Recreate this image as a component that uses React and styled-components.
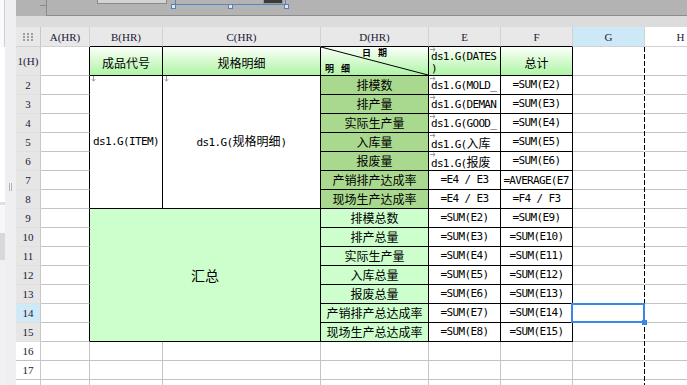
import React from "react";
import styled, { createGlobalStyle } from "styled-components";

const CJK = `"Noto Sans CJK SC", "Noto Sans", sans-serif`;
const MONO = `"DejaVu Sans Mono", "Liberation Mono", "Noto Sans CJK SC", monospace`;
const SERIF = `"Liberation Serif", "Noto Sans CJK SC", serif`;

const GRID = "#c4c4c4";
const INK = "#000";
const HEAD_GRAD = "linear-gradient(180deg, #fbfffa 0%, #d9fbd3 45%, #aef4a5 100%)";
const MID_GREEN = "#a9d98e";
const LIGHT_GREEN = "#ccffcc";

const GlobalStyle = createGlobalStyle`
  *, *::before, *::after { box-sizing: border-box; }
  html, body { margin: 0; padding: 0; background: #fff; overflow: hidden; }
  body { width: 687px; height: 385px; }
  #root { width: 687px; height: 385px; }
`;

const Page = styled.div`
  display: flex;
  width: 687px;
  height: 385px;
  overflow: hidden;
  background: #fff;
`;

const SidePanel = styled.div`
  width: 5px;
  flex-shrink: 0;
  display: flex;
  flex-direction: column;
`;

const SideBlock = styled.div`
  flex: ${(p) => (p.$h ? `0 0 ${p.$h}px` : "1 1 auto")};
  background: ${(p) => p.$bg};
  border-right: 1px solid ${(p) => p.$edge || p.$bg};
`;

const Gutter = styled.div`
  width: 11px;
  flex-shrink: 0;
  background: #efeff1;
  display: flex;
  justify-content: center;
  align-items: flex-start;
  padding-top: 183px;
`;

const Main = styled.div`
  flex: 1 1 auto;
  min-width: 0;
  display: flex;
  flex-direction: column;
`;

const TopBar = styled.div`
  flex: 0 0 16px;
  display: flex;
  background: #b3b3b3;
`;

const Ruler = styled.div`
  width: 30px;
  flex-shrink: 0;
  position: relative;
  &::after {
    content: "";
    position: absolute;
    right: 0;
    top: 5px;
    width: 6px;
    height: 1px;
    background: #8c8c8c;
  }
`;

const Canvas = styled.div`
  flex: 1 1 auto;
  position: relative;
  overflow: hidden;
  border-left: 1px solid #8c8c8c;
  border-bottom: 1px solid #8c8c8c;
`;

const TitleWidget = styled.div`
  position: absolute;
  left: 50px;
  top: -14px;
  width: 70px;
  height: 18px;
  background: #d3d3d3;
  border: 1px solid #8a8a8a;
  display: flex;
  align-items: flex-end;
  justify-content: center;
  overflow: hidden;
  padding-bottom: 3px;
  font-family: ${CJK};
  font-size: 12px;
  line-height: 12px;
  color: #333;
`;

const SelectWidget = styled.div`
  position: absolute;
  left: 128px;
  top: -10px;
  width: 111px;
  height: 15px;
  border: 1px solid #5a85c4;
`;

const DarkWidget = styled.div`
  position: absolute;
  left: 216px;
  top: -6px;
  width: 20px;
  height: 10px;
  background: #3b3b3b;
  border: 1px solid #9a9a9a;
`;

const Handle = styled.div`
  position: absolute;
  top: 4px;
  left: ${(p) => p.$x}px;
  width: 5px;
  height: 5px;
  background: #e2e7ee;
  border: 1px solid #5a7fb0;
`;

const Band = styled.div`
  flex: 0 0 11px;
  background: #dcdcdc;
`;

const Sheet = styled.div`
  display: grid;
  grid-template-columns: 25px 49px 73px 158px 108px 72px 72px 72px 72px;
  grid-template-rows: 20px 29px repeat(17, 19px);
  width: 701px;
`;

const Cell = styled.div`
  grid-column: ${(p) => p.$c} / span ${(p) => p.$cs || 1};
  grid-row: ${(p) => p.$r} / span ${(p) => p.$rs || 1};
  position: relative;
  min-width: 0;
  min-height: 0;
  display: flex;
  justify-content: ${(p) => p.$jc || "center"};
  align-items: ${(p) => p.$ai || "center"};
  background: ${(p) => p.$bg || "#fff"};
  border-right: 1px solid ${(p) => p.$rb || GRID};
  border-bottom: 1px solid ${(p) => p.$bb || GRID};
  overflow: ${(p) => (p.$open ? "visible" : "hidden")};
`;

const ColHead = styled(Cell)`
  font-family: ${SERIF};
  font-size: 11px;
  color: #1c1836;
  white-space: nowrap;
`;

const RowHead = styled(Cell)`
  font-family: ${SERIF};
  font-size: 11px;
  color: #1c1836;
  white-space: nowrap;
`;

const Label = styled.span`
  font-family: ${CJK};
  font-size: ${(p) => p.$size || 12}px;
  line-height: 1;
  color: ${INK};
  white-space: nowrap;
  padding-top: ${(p) => p.$pt || 0}px;
`;

const Formula = styled.span`
  font-family: ${MONO};
  font-size: 11px;
  letter-spacing: -0.6px;
  line-height: 12px;
  color: ${INK};
  white-space: nowrap;
`;

const Expr = styled.div`
  width: 100%;
  align-self: flex-start;
  padding: ${(p) => p.$pt ?? 3}px ${(p) => (p.$center ? 1 : 0)}px 0 ${(p) => (p.$center ? 0 : 2)}px;
  font-family: ${MONO};
  font-size: 11px;
  letter-spacing: -0.7px;
  line-height: ${(p) => p.$lh || 13}px;
  color: ${INK};
  text-align: ${(p) => (p.$center ? "center" : "left")};
  word-break: break-all;
  line-break: anywhere;
  overflow-wrap: anywhere;
  white-space: normal;
`;

const Han = styled.span`
  font-family: ${CJK};
  font-size: 12px;
  letter-spacing: 0;
`;

const Mark = styled.svg`
  position: absolute;
  top: ${(p) => p.$top ?? 1}px;
  left: 1px;
`;

const DiagCell = styled(Cell)`
  flex-direction: column;
  justify-content: space-between;
  align-items: stretch;
  padding: 1px 4px;
`;

const DiagLine = styled.svg`
  position: absolute;
  left: 0;
  top: 0;
  width: 100%;
  height: 100%;
`;

const Note = styled.span`
  position: relative;
  display: flex;
  gap: 7px;
  align-self: ${(p) => p.$side};
  font-family: ${CJK};
  font-size: 9px;
  font-weight: 700;
  line-height: 10px;
  color: ${INK};
`;

const PageBreak = styled.div`
  grid-column: 8;
  grid-row: 2 / -1;
  justify-self: end;
  width: 1px;
  position: relative;
  z-index: 1;
  background: repeating-linear-gradient(to bottom, #000 0 5px, #fff 5px 7px);
`;

const Selection = styled.div`
  position: absolute;
  top: -1px;
  left: -2px;
  right: -1px;
  bottom: -1px;
  border: 2px solid #3a87e8;
  z-index: 2;
`;

const FillHandle = styled.div`
  position: absolute;
  right: -3px;
  bottom: -3px;
  width: 5px;
  height: 5px;
  background: #3a87e8;
  z-index: 3;
`;

const DownMark = () => (
  <Mark width="5" height="6" viewBox="0 0 5 6" $top={0}>
    <path d="M2.5 0V5M0.8 3.2L2.5 5.2L4.2 3.2" stroke="#9a9a9a" fill="none" strokeWidth="1" />
  </Mark>
);

const RightMark = () => (
  <Mark width="6" height="5" viewBox="0 0 6 5" $top={0}>
    <path d="M0 2.5H5M3 0.6L5.2 2.5L3 4.4" stroke="#9a9a9a" fill="none" strokeWidth="1" />
  </Mark>
);

const CornerDots = () => (
  <svg width="10" height="8" viewBox="0 0 10 8">
    {[0, 4, 8].map((x) =>
      [0, 3, 6].map((y) => <rect key={`${x}-${y}`} x={x} y={y} width="2" height="2" fill="#9d9d9d" />)
    )}
  </svg>
);

const Grip = () => (
  <svg width="3" height="8" viewBox="0 0 3 8">
    <path d="M0.5 0V8M2.5 0V8" stroke="#b5b5b5" strokeWidth="1" />
  </svg>
);

const COLS = ["A(HR)", "B(HR)", "C(HR)", "D(HR)", "E", "F", "G", "H"];

const DETAIL = [
  { d: "排模数", e: { wrap: ["ds1.G(MOLD_QTY)"] }, f: "=SUM(E2)" },
  { d: "排产量", e: { wrap: ["ds1.G(DEMAND_QTY)"] }, f: "=SUM(E3)" },
  { d: "实际生产量", e: { wrap: ["ds1.G(GOOD_QTY)"] }, f: "=SUM(E4)" },
  { d: "入库量", e: { wrap: ["ds1.G(", "入库量", ")"] }, f: "=SUM(E5)" },
  { d: "报废量", e: { wrap: ["ds1.G(", "报废量", ")"] }, f: "=SUM(E6)" },
  { d: "产销排产达成率", e: { text: "=E4 / E3" }, f: "=AVERAGE(E7:E8)", fWrap: true },
  { d: "现场生产达成率", e: { text: "=E4 / E3" }, f: "=F4 / F3" },
];

const SUMMARY = [
  { d: "排模总数", e: "=SUM(E2)", f: "=SUM(E9)" },
  { d: "排产总量", e: "=SUM(E3)", f: "=SUM(E10)" },
  { d: "实际生产量", e: "=SUM(E4)", f: "=SUM(E11)" },
  { d: "入库总量", e: "=SUM(E5)", f: "=SUM(E12)" },
  { d: "报废总量", e: "=SUM(E6)", f: "=SUM(E13)" },
  { d: "产销排产总达成率", e: "=SUM(E7)", f: "=SUM(E14)" },
  { d: "现场生产总达成率", e: "=SUM(E8)", f: "=SUM(E15)" },
];

function ExprText({ parts }) {
  return parts.map((p, i) => (i % 2 === 1 ? <Han key={i}>{p}</Han> : <React.Fragment key={i}>{p}</React.Fragment>));
}

export default function App() {
  const rowHeads = [];
  for (let r = 1; r <= 18; r++) {
    const bg = r === 14 ? "#cfe9f7" : r <= 15 ? "#e6e6e6" : "#fff";
    rowHeads.push(
      <RowHead key={`rh${r}`} $c={1} $r={r + 1} $bg={bg} $rb="#c8c8c8" $bb={r <= 15 ? "#e0e0e0" : GRID}>
        {r === 1 ? "1(H)" : r}
      </RowHead>
    );
  }

  const colHeads = COLS.map((label, i) => {
    const bg = label === "G" ? "#cde9f7" : label === "H" ? "#fff" : "#e8e8e8";
    const inTable = i >= 1 && i <= 5;
    return (
      <ColHead key={`ch${label}`} $c={i + 2} $r={1} $bg={bg} $rb="#d2d2d2" $bb={inTable ? INK : "#d2d2d2"}>
        {label}
      </ColHead>
    );
  });

  const colA = [];
  for (let r = 1; r <= 18; r++) {
    colA.push(<Cell key={`a${r}`} $c={2} $r={r + 1} $rb={r <= 15 ? INK : GRID} />);
  }

  const colGH = [];
  for (let r = 1; r <= 18; r++) {
    const selected = r === 14;
    colGH.push(
      <Cell key={`g${r}`} $c={8} $r={r + 1} $open={selected}>
        {selected && (
          <>
            <Selection />
            <FillHandle />
          </>
        )}
      </Cell>
    );
    colGH.push(<Cell key={`h${r}`} $c={9} $r={r + 1} />);
  }

  const tail = [];
  for (let r = 16; r <= 18; r++) {
    for (let c = 3; c <= 7; c++) tail.push(<Cell key={`t${r}-${c}`} $c={c} $r={r + 1} />);
  }

  return (
    <>
      <GlobalStyle />
      <Page>
        <SidePanel>
          <SideBlock $h={47} $bg="#fafafa" $edge="#cfcfcf" />
          <SideBlock $h={155} $bg="#ffffff" />
          <SideBlock $h={3} $bg="#e0e0e0" />
          <SideBlock $h={28} $bg="#f7f7f7" />
          <SideBlock $h={27} $bg="#d8d8d8" />
          <SideBlock $bg="#f1f1f1" />
        </SidePanel>
        <Gutter>
          <Grip />
        </Gutter>
        <Main>
          <TopBar>
            <Ruler />
            <Canvas>
              <TitleWidget>参数栏</TitleWidget>
              <SelectWidget />
              <DarkWidget />
              <Handle $x={124} />
              <Handle $x={181} />
              <Handle $x={237} />
            </Canvas>
          </TopBar>
          <Band />
          <Sheet>
            <ColHead $c={1} $r={1} $bg="#e8e8e8" $rb="#c8c8c8" $bb="#d2d2d2">
              <CornerDots />
            </ColHead>
            {colHeads}
            {rowHeads}
            {colA}

            {/* row 1 : header */}
            <Cell $c={3} $r={2} $bg={HEAD_GRAD} $rb={INK} $bb={INK}>
              <Label $pt={4}>成品代号</Label>
            </Cell>
            <Cell $c={4} $r={2} $bg={HEAD_GRAD} $rb={INK} $bb={INK}>
              <Label $pt={4}>规格明细</Label>
            </Cell>
            <DiagCell $c={5} $r={2} $bg={HEAD_GRAD} $rb={INK} $bb={INK}>
              <DiagLine viewBox="0 0 107 28" preserveAspectRatio="none">
                <line x1="0" y1="0" x2="107" y2="28" stroke="#000" strokeWidth="1" />
              </DiagLine>
              <Note $side="center">
                <span>日</span>
                <span>期</span>
              </Note>
              <Note $side="flex-start">
                <span>明</span>
                <span>细</span>
              </Note>
            </DiagCell>
            <Cell $c={6} $r={2} $bg={HEAD_GRAD} $rb={INK} $bb={INK}>
              <RightMark />
              <Expr $pt={4} $lh={12}>ds1.G(DATES)</Expr>
            </Cell>
            <Cell $c={7} $r={2} $bg={HEAD_GRAD} $rb={INK} $bb={INK}>
              <Label $pt={4}>总计</Label>
            </Cell>

            {/* rows 2-8 : detail */}
            <Cell $c={3} $r={3} $rs={7} $rb={INK} $bb={INK}>
              <DownMark />
              <Formula>ds1.G(ITEM)</Formula>
            </Cell>
            <Cell $c={4} $r={3} $rs={7} $rb={INK} $bb={INK}>
              <DownMark />
              <Formula>
                ds1.G(<Han>规格明细</Han>)
              </Formula>
            </Cell>
            {DETAIL.map((row, i) => (
              <React.Fragment key={`d${i}`}>
                <Cell $c={5} $r={i + 3} $bg={MID_GREEN} $rb={INK} $bb={INK}>
                  <Label>{row.d}</Label>
                </Cell>
                <Cell $c={6} $r={i + 3} $rb={INK} $bb={INK}>
                  {row.e.wrap ? (
                    <>
                      <RightMark />
                      <Expr>
                        <ExprText parts={row.e.wrap} />
                      </Expr>
                    </>
                  ) : (
                    <Formula>{row.e.text}</Formula>
                  )}
                </Cell>
                <Cell $c={7} $r={i + 3} $rb={INK} $bb={INK}>
                  {row.fWrap ? <Expr $center>{row.f}</Expr> : <Formula>{row.f}</Formula>}
                </Cell>
              </React.Fragment>
            ))}

            {/* rows 9-15 : summary */}
            <Cell $c={3} $cs={2} $r={10} $rs={7} $bg={LIGHT_GREEN} $rb={INK} $bb={INK}>
              <Label $size={14}>汇总</Label>
            </Cell>
            {SUMMARY.map((row, i) => (
              <React.Fragment key={`s${i}`}>
                <Cell $c={5} $r={i + 10} $bg={LIGHT_GREEN} $rb={INK} $bb={INK}>
                  <Label>{row.d}</Label>
                </Cell>
                <Cell $c={6} $r={i + 10} $rb={INK} $bb={INK}>
                  <Formula>{row.e}</Formula>
                </Cell>
                <Cell $c={7} $r={i + 10} $rb={INK} $bb={INK}>
                  <Formula>{row.f}</Formula>
                </Cell>
              </React.Fragment>
            ))}

            {tail}
            {colGH}
            <PageBreak />
          </Sheet>
        </Main>
      </Page>
    </>
  );
}
